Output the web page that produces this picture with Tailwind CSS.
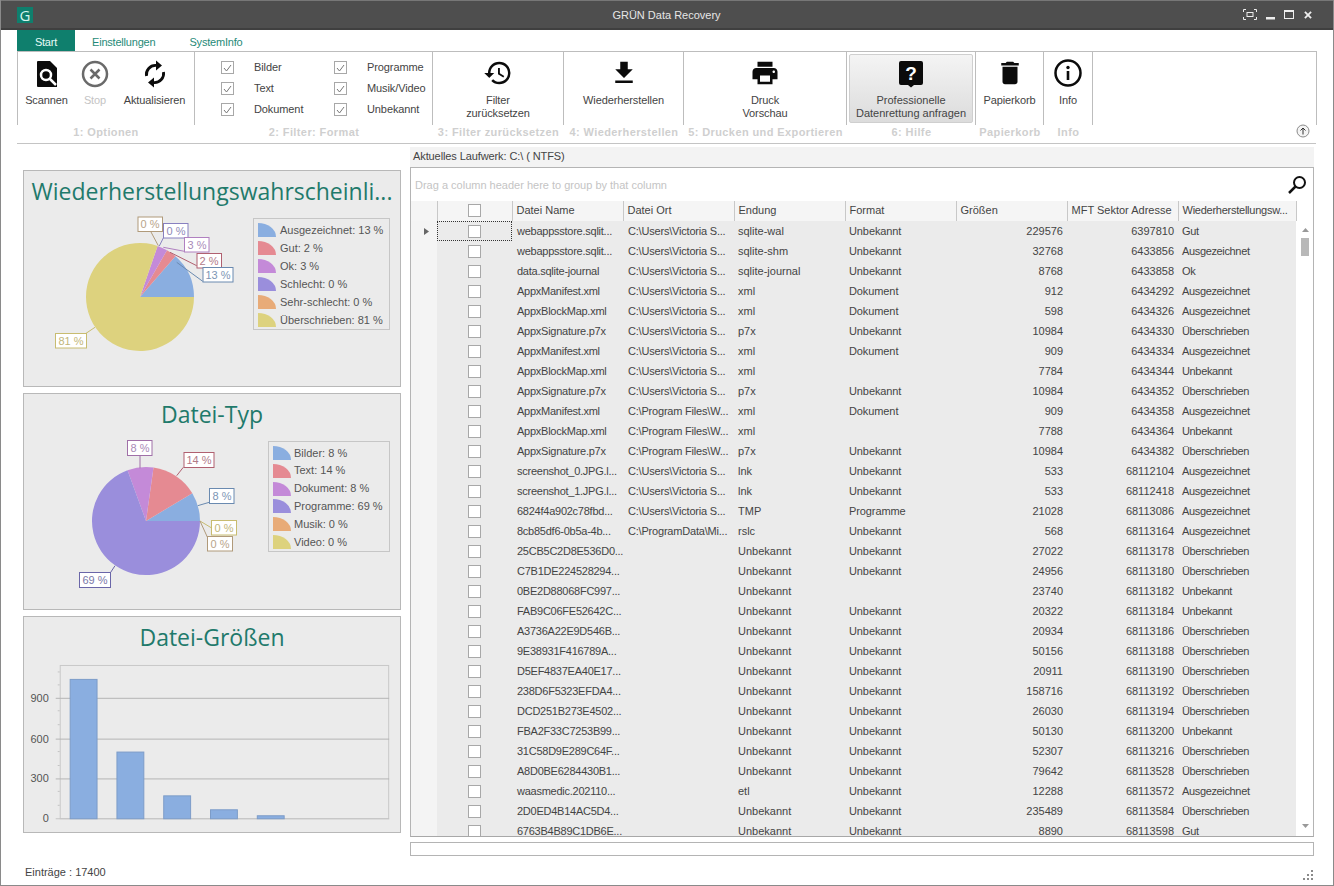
<!DOCTYPE html>
<html lang="de">
<head>
    <title>GRÜN Data Recovery</title>
    <script src="https://cdn.jsdelivr.net/npm/@tailwindcss/browser@4"></script>
</head>
<body class="bg-white">
<div class="w-[1334px] h-[886px] flex flex-col overflow-hidden bg-white border-r border-b border-l border-[#8a8a8a] font-['Liberation_Sans',sans-serif] text-[11px] text-[#444]">

    <!-- title bar -->
    <div class="h-[30px] shrink-0 bg-[#4e4e4e] border-t border-[#777] border-b-2 border-b-[#3f3f3f] flex items-center pl-[16px] pr-[21px] text-white">
        <div class="w-[16px] h-[16px] bg-[#0f7f6d] text-[#d8f5ee] font-['Open_Sans',sans-serif] text-[15px] leading-[16px] text-center">G</div>
        <div class="flex-1 text-center text-[#e6e6e6] pl-[57px] pt-[2px]">GRÜN Data Recovery</div>
        <div class="flex items-center gap-[9px]">
            <svg width="14" height="11" viewBox="0 0 14 11" fill="none" stroke="#eee"><path d="M.5 3V.5H3M11 .5h2.500V3M13.500 8v2.500H11M3 10.500H.5V8"/><rect x="4" y="3.500" width="6" height="4" stroke-width="1"/></svg>
            <svg width="9" height="10" viewBox="0 0 9 10"><rect y="7" width="9" height="2.500" fill="#eee"/></svg>
            <svg width="10" height="9" viewBox="0 0 10 9" fill="none" stroke="#eee"><rect x=".5" y="1" width="9" height="7.500"/><rect x="0" y="0" width="10" height="2" fill="#eee" stroke="none"/></svg>
            <svg class="ml-[1px]" width="8" height="8" viewBox="0 0 9 9" stroke="#eee" stroke-width="2"><path d="M1 1l7 7M8 1L1 8"/></svg>
        </div>
    </div>

    <!-- tabs -->
    <div class="h-[21px] shrink-0 flex pl-[16px] text-[#1f8a78] tracking-[-.2px]">
        <div class="w-[58px] bg-[#0f7f6d] text-[#e8fbf6] flex items-center justify-center pt-[3px]">Start</div>
        <div class="ml-[17px] flex items-center pt-[3px]">Einstellungen</div>
        <div class="ml-[34px] flex items-center pt-[3px]">SystemInfo</div>
    </div>

    <!-- ribbon -->
    <div class="h-[92px] shrink-0 flex pl-[16px] pr-[16px] border-b border-transparent tracking-[-.1px]">
        <div class="w-[178px] flex flex-col">
            <div class="h-[74px] border-t border-l border-r border-[#bdbdbd] flex pt-[8px] text-center">
                <div class="w-[57px] flex flex-col items-center">
                    <svg class="w-[24px] h-[28px]" viewBox="0 0 24 28"><path d="M3 1h12l7 7v19H3a1 1 0 0 1-1-1V2a1 1 0 0 1 1-1z" fill="#0b0b0b"/><circle cx="11" cy="15" r="5" fill="none" stroke="#fff" stroke-width="2.500"/><path d="M15 19l6 6" stroke="#fff" stroke-width="2.500"/></svg>
                    <span class="mt-[4px]">Scannen</span>
                </div>
                <div class="w-[40px] flex flex-col items-center text-[#c4c4c4]">
                    <svg class="w-[28px] h-[28px]" viewBox="0 0 28 28" fill="none" stroke="#6a6a6a" stroke-width="2.500"><circle cx="14" cy="14" r="12"/><path d="M9.500 9.500l9 9M18.500 9.500l-9 9"/></svg>
                    <span class="mt-[4px]">Stop</span>
                </div>
                <div class="flex-1 flex flex-col items-center">
                    <svg class="w-[22px] h-[28px]" viewBox="0 0 22 28" fill="none" stroke="#0b0b0b" stroke-width="2.800"><path d="M2.500 16A9 9 0 0 1 12 5.500"/><path d="M19.500 12A9 9 0 0 1 10 22.500"/><path d="M12 .5L18 5.500L12 10.500Z" fill="#0b0b0b" stroke="none"/><path d="M10 17.500L4 22.500L10 27.500Z" fill="#0b0b0b" stroke="none"/></svg>
                    <span class="mt-[4px]">Aktualisieren</span>
                </div>
            </div>
            <div class="text-center font-bold text-[#cfcfcf] -mt-[1px] tracking-[.4px]">1: Optionen</div>
        </div>

        <div class="w-[238px] flex flex-col">
            <div class="h-[74px] border-t border-r border-[#bdbdbd] grid grid-cols-[113px_1fr] grid-rows-[21px_21px_21px] pl-[26px] pt-[5px] items-center">
                <div class="flex items-center gap-[20px]"><span class="w-[13px] h-[13px] border border-[#a8a8a8] bg-white flex items-center justify-center"><svg width="9" height="8" viewBox="0 0 9 8" fill="none" stroke="#777"><path d="M1 4l2.500 3L8 1"/></svg></span>Bilder</div>
                <div class="flex items-center gap-[20px]"><span class="w-[13px] h-[13px] border border-[#a8a8a8] bg-white flex items-center justify-center"><svg width="9" height="8" viewBox="0 0 9 8" fill="none" stroke="#777"><path d="M1 4l2.500 3L8 1"/></svg></span>Programme</div>
                <div class="flex items-center gap-[20px]"><span class="w-[13px] h-[13px] border border-[#a8a8a8] bg-white flex items-center justify-center"><svg width="9" height="8" viewBox="0 0 9 8" fill="none" stroke="#777"><path d="M1 4l2.500 3L8 1"/></svg></span>Text</div>
                <div class="flex items-center gap-[20px]"><span class="w-[13px] h-[13px] border border-[#a8a8a8] bg-white flex items-center justify-center"><svg width="9" height="8" viewBox="0 0 9 8" fill="none" stroke="#777"><path d="M1 4l2.500 3L8 1"/></svg></span>Musik/Video</div>
                <div class="flex items-center gap-[20px]"><span class="w-[13px] h-[13px] border border-[#a8a8a8] bg-white flex items-center justify-center"><svg width="9" height="8" viewBox="0 0 9 8" fill="none" stroke="#777"><path d="M1 4l2.500 3L8 1"/></svg></span>Dokument</div>
                <div class="flex items-center gap-[20px]"><span class="w-[13px] h-[13px] border border-[#a8a8a8] bg-white flex items-center justify-center"><svg width="9" height="8" viewBox="0 0 9 8" fill="none" stroke="#777"><path d="M1 4l2.500 3L8 1"/></svg></span>Unbekannt</div>
            </div>
            <div class="text-center font-bold text-[#cfcfcf] -mt-[1px] tracking-[.4px]">2: Filter: Format</div>
        </div>

        <div class="w-[131px] flex flex-col">
            <div class="h-[74px] border-t border-r border-[#bdbdbd] flex flex-col items-center pt-[6px] leading-[13px] text-center">
                <svg class="w-[32px] h-[30px]" viewBox="0 0 24 24" fill="#0b0b0b"><path d="M13 3a9 9 0 0 0-9 9H1l3.890 3.890.07.14L9 12H6c0-3.870 3.130-7 7-7s7 3.130 7 7-3.130 7-7 7c-1.930 0-3.680-.79-4.940-2.060l-1.420 1.420A8.954 8.954 0 0 0 13 21a9 9 0 0 0 0-18zm-1 5v5l4.280 2.540.72-1.210-3.500-2.080V8H12z"/></svg>
                <span class="mt-[6px]">Filter<br>zurücksetzen</span>
            </div>
            <div class="text-center font-bold text-[#cfcfcf] -mt-[1px] tracking-[.4px]">3: Filter zurücksetzen</div>
        </div>

        <div class="w-[120px] flex flex-col">
            <div class="h-[74px] border-t border-r border-[#bdbdbd] flex flex-col items-center pt-[6px] leading-[13px] text-center">
                <svg class="w-[30px] h-[30px]" viewBox="0 0 24 24" fill="#0b0b0b"><path d="M19 9h-4V3H9v6H5l7 7 7-7zM5 18v2h14v-2H5z"/></svg>
                <span class="mt-[6px]">Wiederherstellen</span>
            </div>
            <div class="text-center font-bold text-[#cfcfcf] -mt-[1px] tracking-[.4px]">4: Wiederherstellen</div>
        </div>

        <div class="w-[163px] flex flex-col">
            <div class="h-[74px] border-t border-r border-[#bdbdbd] flex flex-col items-center pt-[6px] leading-[13px] text-center">
                <svg class="w-[32px] h-[30px]" viewBox="0 0 24 24" fill="#0b0b0b"><path d="M19 8H5c-1.660 0-3 1.340-3 3v6h4v4h12v-4h4v-6c0-1.660-1.340-3-3-3zm-3 11H8v-5h8v5zm3-7c-.55 0-1-.45-1-1s.45-1 1-1 1 .45 1 1-.45 1-1 1zm-1-9H6v4h12V3z"/></svg>
                <span class="mt-[6px]">Druck<br>Vorschau</span>
            </div>
            <div class="text-center font-bold text-[#cfcfcf] -mt-[1px] tracking-[.4px]">5: Drucken und Exportieren</div>
        </div>

        <div class="w-[129px] flex flex-col">
            <div class="h-[74px] border-t border-r border-[#bdbdbd] pt-[2px] px-[2px]">
                <div class="h-[69px] border border-[#cfcfcf] rounded-[2px] bg-gradient-to-b from-[#f4f4f4] to-[#dcdcdc] flex flex-col items-center pt-[5px] leading-[13px] text-center">
                    <svg class="w-[26px] h-[28px]" viewBox="0 0 26 28"><path d="M3 1h20a2 2 0 0 1 2 2v20a2 2 0 0 1-2 2h-7l-3 2.500L10 25H3a2 2 0 0 1-2-2V3a2 2 0 0 1 2-2z" fill="#0b0b0b"/><text x="13" y="20" text-anchor="middle" fill="#fff" font-size="19" font-weight="700" font-family="Liberation Sans, sans-serif">?</text></svg>
                    <span class="mt-[6px] tracking-normal">Professionelle<br>Datenrettung anfragen</span>
                </div>
            </div>
            <div class="text-center font-bold text-[#cfcfcf] -mt-[1px] tracking-[.4px]">6: Hilfe</div>
        </div>

        <div class="w-[68px] flex flex-col">
            <div class="h-[74px] border-t border-r border-[#bdbdbd] flex flex-col items-center pt-[6px] leading-[13px] text-center">
                <svg class="w-[32px] h-[30px]" viewBox="0 0 24 24" fill="#0b0b0b"><path d="M6 19c0 1.100.9 2 2 2h8c1.100 0 2-.9 2-2V7H6v12zM19 4h-3.500l-1-1h-5l-1 1H5v2h14V4z"/></svg>
                <span class="mt-[6px]">Papierkorb</span>
            </div>
            <div class="text-center font-bold text-[#cfcfcf] -mt-[1px] tracking-[.4px]">Papierkorb</div>
        </div>

        <div class="w-[49px] flex flex-col">
            <div class="h-[74px] border-t border-r border-[#bdbdbd] flex flex-col items-center pt-[6px] leading-[13px] text-center">
                <svg class="w-[30px] h-[30px]" viewBox="0 0 30 30" fill="none"><circle cx="15" cy="15" r="12.500" stroke="#0b0b0b" stroke-width="2.500"/><circle cx="15" cy="9.500" r="1.700" fill="#0b0b0b"/><rect x="13.700" y="13" width="2.600" height="9" fill="#0b0b0b"/></svg>
                <span class="mt-[6px]">Info</span>
            </div>
            <div class="text-center font-bold text-[#cfcfcf] -mt-[1px] tracking-[.4px]">Info</div>
        </div>

        <div class="flex-1 flex flex-col">
            <div class="h-[74px] border-t border-r border-[#bdbdbd]"></div>
            <div class="flex justify-end pr-[7px] -mt-[1px]">
                <svg width="14" height="14" viewBox="0 0 14 14" fill="#f4f4f4" stroke="#8a8a8a"><circle cx="7" cy="7" r="6"/><path d="M7 10.500V4M4.500 6.500L7 4l2.500 2.500" fill="none" stroke="#333"/></svg>
            </div>
        </div>
    </div>
    <div class="h-px shrink-0 bg-[#c4c4c4] ml-[16px] mr-[17px]"></div>

    <!-- main -->
    <div class="flex-1 flex min-h-0 relative">
        <!-- left charts -->
        <div class="w-[409px] shrink-0 pl-[22px] pr-[9px] pt-[26px] flex flex-col gap-[6px]">

            <div class="h-[217px] bg-[#ebebeb] border border-[#b8b8b8] flex flex-col">
                <div class="h-[42px] text-center font-['Open_Sans',sans-serif] text-[23px] leading-[41px] text-[#1f7a6b] whitespace-nowrap">Wiederherstellungswahrscheinli...</div>
                <div class="flex items-start">
                    <svg class="w-[229px] h-[174px] shrink-0 font-['Liberation_Sans',sans-serif] text-[11px]" viewBox="24 213 229 174">
                        <g transform="translate(-1 0)">
                            <path d="M141 298L195 298A54 54 0 0 0 176.400 257.200Z" fill="#8aaee0"/>
                            <path d="M141 298L176.400 257.200A54 54 0 0 0 168 251.200Z" fill="#e58a92"/>
                            <path d="M141 298L168 251.200A54 54 0 0 0 158.600 246.900Z" fill="#c48ad8"/>
                            <path d="M141 298L158.600 246.900A54 54 0 1 0 195 298Z" fill="#ddd27e"/>
                        </g>
                        <g fill="none" stroke-width="1">
                            <path d="M151 233L158.300 246.700" stroke="#b09a7a"/>
                            <path d="M163.300 239L159.300 247" stroke="#8880c0"/>
                            <path d="M184.300 252.300L163.300 248.300" stroke="#b080c0"/>
                            <path d="M196.700 266.700L170 253.300" stroke="#b06070"/>
                            <path d="M202.700 282.300L176.700 263.300" stroke="#6a8ab0"/>
                            <path d="M85 335L95 328.300" stroke="#c8bc70"/>
                        </g>
                        <g fill="#fff">
                            <rect x="138" y="218" width="24.500" height="14.500" stroke="#b09a7a"/>
                            <rect x="163.500" y="224.500" width="24.500" height="14.500" stroke="#8880c0"/>
                            <rect x="184.500" y="238.500" width="24.500" height="14.500" stroke="#b080c0"/>
                            <rect x="197" y="254.500" width="24.500" height="14.500" stroke="#b06070"/>
                            <rect x="203" y="268.500" width="30" height="14.500" stroke="#6a8ab0"/>
                            <rect x="55.500" y="334.500" width="31" height="14.500" stroke="#c8bc70"/>
                        </g>
                        <g text-anchor="middle" font-size="11">
                            <text x="150" y="229" fill="#b8a58a">0 %</text>
                            <text x="176" y="235.500" fill="#8f8ab8">0 %</text>
                            <text x="197" y="249.500" fill="#a98ab8">3 %</text>
                            <text x="209" y="265.500" fill="#b07a88">2 %</text>
                            <text x="218" y="279.500" fill="#7d95b5">13 %</text>
                            <text x="71" y="345.500" fill="#bfb67a">81 %</text>
                        </g>
                    </svg>
                    <div class="w-[137px] h-[112px] mt-[6px] border border-[#c6c6c6] pl-[4px] pt-[2px] flex flex-col text-[#555] whitespace-nowrap">
                        <div class="h-[18px] flex items-center gap-[4px]"><svg width="18" height="14" viewBox="0 0 18 14"><path d="M0 14V0a18 14 0 0 1 18 14Z" fill="#8aaee0"/></svg>Ausgezeichnet: 13 %</div>
                        <div class="h-[18px] flex items-center gap-[4px]"><svg width="18" height="14" viewBox="0 0 18 14"><path d="M0 14V0a18 14 0 0 1 18 14Z" fill="#e58a92"/></svg>Gut: 2 %</div>
                        <div class="h-[18px] flex items-center gap-[4px]"><svg width="18" height="14" viewBox="0 0 18 14"><path d="M0 14V0a18 14 0 0 1 18 14Z" fill="#c48ad8"/></svg>Ok: 3 %</div>
                        <div class="h-[18px] flex items-center gap-[4px]"><svg width="18" height="14" viewBox="0 0 18 14"><path d="M0 14V0a18 14 0 0 1 18 14Z" fill="#9a8edc"/></svg>Schlecht: 0 %</div>
                        <div class="h-[18px] flex items-center gap-[4px]"><svg width="18" height="14" viewBox="0 0 18 14"><path d="M0 14V0a18 14 0 0 1 18 14Z" fill="#e8ab78"/></svg>Sehr-schlecht: 0 %</div>
                        <div class="h-[18px] flex items-center gap-[4px]"><svg width="18" height="14" viewBox="0 0 18 14"><path d="M0 14V0a18 14 0 0 1 18 14Z" fill="#ddd27e"/></svg>Überschrieben: 81 %</div>
                    </div>
                </div>
            </div>

            <div class="h-[217px] bg-[#ebebeb] border border-[#b8b8b8] flex flex-col">
                <div class="h-[42px] text-center font-['Open_Sans',sans-serif] text-[23px] leading-[41px] text-[#1f7a6b] whitespace-nowrap">Datei-Typ</div>
                <div class="flex items-start">
                    <svg class="w-[244px] h-[174px] shrink-0" viewBox="24 436 244 174">
                        <path d="M146 522L200 522A54 54 0 0 0 192.300 494.200Z" fill="#8aaee0"/>
                        <path d="M146 522L192.300 494.200A54 54 0 0 0 153.500 468.500Z" fill="#e58a92"/>
                        <path d="M146 522L153.500 468.500A54 54 0 0 0 127.500 471.300Z" fill="#c48ad8"/>
                        <path d="M146 522L127.500 471.300A54 54 0 1 0 200 522Z" fill="#9a8edc"/>
                        <g fill="none" stroke-width="1">
                            <path d="M140 456.700V469.300" stroke="#a070a8"/>
                            <path d="M183.300 468.300L176.700 476.700" stroke="#b06070"/>
                            <path d="M209.300 503.300L197.700 506.700" stroke="#6a8ab0"/>
                            <path d="M200 522L211.700 529" stroke="#c8bc70"/>
                            <path d="M200 522L207.300 538" stroke="#b09a7a"/>
                            <path d="M110.700 573.300L115 566.700" stroke="#6a66a8"/>
                        </g>
                        <g fill="#fff">
                            <rect x="127.500" y="441.500" width="24.500" height="15" stroke="#a070a8"/>
                            <rect x="184" y="453.500" width="30" height="15" stroke="#b06070"/>
                            <rect x="209.500" y="489.500" width="24.500" height="15" stroke="#6a8ab0"/>
                            <rect x="211.500" y="521.500" width="25" height="14.500" stroke="#c8bc70"/>
                            <rect x="207.500" y="537.500" width="25" height="14.500" stroke="#b09a7a"/>
                            <rect x="79.500" y="573.500" width="31" height="15" stroke="#6a66a8"/>
                        </g>
                        <g text-anchor="middle" font-size="11" font-family="Liberation Sans, sans-serif">
                            <text x="140" y="453" fill="#a98ab8">8 %</text>
                            <text x="199" y="465" fill="#b07a88">14 %</text>
                            <text x="222" y="501" fill="#7d95b5">8 %</text>
                            <text x="224" y="533" fill="#bfb67a">0 %</text>
                            <text x="220" y="549" fill="#b8a58a">0 %</text>
                            <text x="95" y="585" fill="#7a78a8">69 %</text>
                        </g>
                    </svg>
                    <div class="w-[122px] h-[111px] mt-[6px] border border-[#c6c6c6] pl-[4px] pt-[2px] flex flex-col text-[#555] whitespace-nowrap">
                        <div class="h-[18px] flex items-center gap-[3px]"><svg width="18" height="14" viewBox="0 0 18 14"><path d="M0 14V0a18 14 0 0 1 18 14Z" fill="#8aaee0"/></svg>Bilder: 8 %</div>
                        <div class="h-[18px] flex items-center gap-[3px]"><svg width="18" height="14" viewBox="0 0 18 14"><path d="M0 14V0a18 14 0 0 1 18 14Z" fill="#e58a92"/></svg>Text: 14 %</div>
                        <div class="h-[18px] flex items-center gap-[3px]"><svg width="18" height="14" viewBox="0 0 18 14"><path d="M0 14V0a18 14 0 0 1 18 14Z" fill="#c48ad8"/></svg>Dokument: 8 %</div>
                        <div class="h-[18px] flex items-center gap-[3px]"><svg width="18" height="14" viewBox="0 0 18 14"><path d="M0 14V0a18 14 0 0 1 18 14Z" fill="#9a8edc"/></svg>Programme: 69 %</div>
                        <div class="h-[18px] flex items-center gap-[3px]"><svg width="18" height="14" viewBox="0 0 18 14"><path d="M0 14V0a18 14 0 0 1 18 14Z" fill="#e8ab78"/></svg>Musik: 0 %</div>
                        <div class="h-[18px] flex items-center gap-[3px]"><svg width="18" height="14" viewBox="0 0 18 14"><path d="M0 14V0a18 14 0 0 1 18 14Z" fill="#ddd27e"/></svg>Video: 0 %</div>
                    </div>
                </div>
            </div>

            <div class="h-[217px] bg-[#ebebeb] border border-[#b8b8b8] flex flex-col">
                <div class="h-[42px] text-center font-['Open_Sans',sans-serif] text-[23px] leading-[41px] text-[#1f7a6b] whitespace-nowrap">Datei-Größen</div>
                <svg class="w-[376px] h-[174px]" viewBox="25 659 376 174">
                    <rect x="60.500" y="665.500" width="330" height="154" fill="none" stroke="#c8c8c8"/>
                    <g stroke="#b4b4b4"><path d="M56 698.500H391M56 739.500H391M56 779.500H391"/><path d="M56 819.500H391" stroke="#c4c4c4"/></g>
                    <g stroke="#c4c4c4"><path d="M58 672h2M58 685h2M58 711h2M58 725h2M58 752h2M58 766h2M58 792h2M58 806h2"/></g>
                    <g fill="#8aaee0" stroke="#7d9cc8">
                        <rect x="70.500" y="679.500" width="27" height="140"/>
                        <rect x="117.500" y="752.500" width="27" height="67"/>
                        <rect x="164.500" y="796.500" width="27" height="23"/>
                        <rect x="211.500" y="810.500" width="27" height="9"/>
                        <rect x="258.500" y="816.500" width="27" height="3"/>
                    </g>
                    <g text-anchor="end" font-size="11" fill="#555" font-family="Liberation Sans, sans-serif">
                        <text x="49" y="702">900</text>
                        <text x="49" y="743">600</text>
                        <text x="49" y="783">300</text>
                        <text x="49" y="823">0</text>
                    </g>
                </svg>
            </div>

            <div class="mt-[25px] pl-[2px] text-[#444]">Einträge : 17400</div>
        </div>

        <!-- grid -->
        <div class="flex-1 flex flex-col min-w-0 pt-[3px] pr-[19px]">
            <div class="h-[20px] shrink-0 bg-[#f3f3f3] flex items-center pl-[3px] pb-[2px] tracking-[-.1px]">Aktuelles Laufwerk: C:\ ( NTFS)</div>
            <div class="h-[670px] shrink-0 border border-b-[#a8a8a8] border-[#b4b4b4] flex flex-col overflow-hidden">
                <div class="h-[33px] shrink-0 flex items-center justify-between pl-[4px] pr-[6px] text-[#c4c4c4]">
                    <span class="pt-[2px]">Drag a column header here to group by that column</span>
                    <svg width="20" height="20" viewBox="0 0 20 20" fill="none" stroke="#111"><circle cx="12.500" cy="7.500" r="5.500" stroke-width="2"/><path d="M8.500 11.500L2 18" stroke-width="2.500"/></svg>
                </div>
                <div class="flex-1 flex min-h-0">
                    <table class="w-[885px] table-fixed border-collapse whitespace-nowrap self-start [&_td]:h-[20px] [&_td]:p-0 [&_td]:px-[4px] [&_td]:overflow-hidden [&_td]:bg-[#ebebeb] [&_td:first-child]:bg-[#f4f4f4] [&_td:nth-child(3)]:pl-[5px] [&_td:nth-child(3)]:pr-0 [&_td:nth-child(3)]:tracking-[-.25px] [&_td:nth-child(4)]:pl-[5px] [&_td:nth-child(4)]:pr-0 [&_td:nth-child(4)]:tracking-[-.2px] [&_td:nth-child(6)]:tracking-[-.1px] [&_td:nth-child(9)]:tracking-[-.35px] [&_th]:h-[20px] [&_th]:p-0 [&_th]:px-[4px] [&_th]:pb-[2px] [&_th]:font-normal [&_th]:text-left [&_th]:overflow-hidden [&_th]:bg-[#f5f5f5] [&_th]:border-r [&_th]:border-[#c8c8c8] [&_th:last-child]:pr-0 [&_th:last-child]:tracking-[-.25px]">
                        <colgroup><col class="w-[26px]"><col class="w-[75px]"><col class="w-[111px]"><col class="w-[111px]"><col class="w-[111px]"><col class="w-[111px]"><col class="w-[111px]"><col class="w-[111px]"><col class="w-[118px]"></colgroup>
                        <thead><tr>
                            <th></th><th><span class="block mx-auto w-[13px] h-[13px] border border-[#a8a8a8] bg-white"></span></th><th>Datei Name</th><th>Datei Ort</th><th>Endung</th><th>Format</th><th>Größen</th><th>MFT Sektor Adresse</th><th>Wiederherstellungsw...</th>
                        </tr></thead>
                        <tbody class="[&_td:nth-child(2)>span]:block [&_td:nth-child(2)>span]:mx-auto [&_td:nth-child(2)>span]:w-[13px] [&_td:nth-child(2)>span]:h-[13px] [&_td:nth-child(2)>span]:border [&_td:nth-child(2)>span]:border-[#a8a8a8] [&_td:nth-child(2)>span]:bg-white [&_td:nth-child(7)]:text-right [&_td:nth-child(8)]:text-right">
                            <tr><td><svg class="ml-[9px]" width="5" height="7" viewBox="0 0 5 7"><path d="M0 0l5 3.500L0 7z" fill="#666"/></svg></td><td class="outline-1 outline-dotted -outline-offset-1 outline-[#333]"><span></span></td><td>webappsstore.sqlit...</td><td>C:\Users\Victoria S...</td><td>sqlite-wal</td><td>Unbekannt</td><td>229576</td><td>6397810</td><td>Gut</td></tr>
                            <tr><td></td><td><span></span></td><td>webappsstore.sqlit...</td><td>C:\Users\Victoria S...</td><td>sqlite-shm</td><td>Unbekannt</td><td>32768</td><td>6433856</td><td>Ausgezeichnet</td></tr>
                            <tr><td></td><td><span></span></td><td>data.sqlite-journal</td><td>C:\Users\Victoria S...</td><td>sqlite-journal</td><td>Unbekannt</td><td>8768</td><td>6433858</td><td>Ok</td></tr>
                            <tr><td></td><td><span></span></td><td>AppxManifest.xml</td><td>C:\Users\Victoria S...</td><td>xml</td><td>Dokument</td><td>912</td><td>6434292</td><td>Ausgezeichnet</td></tr>
                            <tr><td></td><td><span></span></td><td>AppxBlockMap.xml</td><td>C:\Users\Victoria S...</td><td>xml</td><td>Dokument</td><td>598</td><td>6434326</td><td>Ausgezeichnet</td></tr>
                            <tr><td></td><td><span></span></td><td>AppxSignature.p7x</td><td>C:\Users\Victoria S...</td><td>p7x</td><td>Unbekannt</td><td>10984</td><td>6434330</td><td>Überschrieben</td></tr>
                            <tr><td></td><td><span></span></td><td>AppxManifest.xml</td><td>C:\Users\Victoria S...</td><td>xml</td><td>Dokument</td><td>909</td><td>6434334</td><td>Ausgezeichnet</td></tr>
                            <tr><td></td><td><span></span></td><td>AppxBlockMap.xml</td><td>C:\Users\Victoria S...</td><td>xml</td><td></td><td>7784</td><td>6434344</td><td>Unbekannt</td></tr>
                            <tr><td></td><td><span></span></td><td>AppxSignature.p7x</td><td>C:\Users\Victoria S...</td><td>p7x</td><td>Unbekannt</td><td>10984</td><td>6434352</td><td>Überschrieben</td></tr>
                            <tr><td></td><td><span></span></td><td>AppxManifest.xml</td><td>C:\Program Files\W...</td><td>xml</td><td>Dokument</td><td>909</td><td>6434358</td><td>Ausgezeichnet</td></tr>
                            <tr><td></td><td><span></span></td><td>AppxBlockMap.xml</td><td>C:\Program Files\W...</td><td>xml</td><td></td><td>7788</td><td>6434364</td><td>Unbekannt</td></tr>
                            <tr><td></td><td><span></span></td><td>AppxSignature.p7x</td><td>C:\Program Files\W...</td><td>p7x</td><td>Unbekannt</td><td>10984</td><td>6434382</td><td>Überschrieben</td></tr>
                            <tr><td></td><td><span></span></td><td>screenshot_0.JPG.l...</td><td>C:\Users\Victoria S...</td><td>lnk</td><td>Unbekannt</td><td>533</td><td>68112104</td><td>Ausgezeichnet</td></tr>
                            <tr><td></td><td><span></span></td><td>screenshot_1.JPG.l...</td><td>C:\Users\Victoria S...</td><td>lnk</td><td>Unbekannt</td><td>533</td><td>68112418</td><td>Ausgezeichnet</td></tr>
                            <tr><td></td><td><span></span></td><td>6824f4a902c78fbd...</td><td>C:\Users\Victoria S...</td><td>TMP</td><td>Programme</td><td>21028</td><td>68113086</td><td>Ausgezeichnet</td></tr>
                            <tr><td></td><td><span></span></td><td>8cb85df6-0b5a-4b...</td><td>C:\ProgramData\Mi...</td><td>rslc</td><td>Unbekannt</td><td>568</td><td>68113164</td><td>Ausgezeichnet</td></tr>
                            <tr><td></td><td><span></span></td><td>25CB5C2D8E536D0...</td><td></td><td>Unbekannt</td><td>Unbekannt</td><td>27022</td><td>68113178</td><td>Überschrieben</td></tr>
                            <tr><td></td><td><span></span></td><td>C7B1DE224528294...</td><td></td><td>Unbekannt</td><td>Unbekannt</td><td>24956</td><td>68113180</td><td>Überschrieben</td></tr>
                            <tr><td></td><td><span></span></td><td>0BE2D88068FC997...</td><td></td><td>Unbekannt</td><td></td><td>23740</td><td>68113182</td><td>Unbekannt</td></tr>
                            <tr><td></td><td><span></span></td><td>FAB9C06FE52642C...</td><td></td><td>Unbekannt</td><td>Unbekannt</td><td>20322</td><td>68113184</td><td>Unbekannt</td></tr>
                            <tr><td></td><td><span></span></td><td>A3736A22E9D546B...</td><td></td><td>Unbekannt</td><td>Unbekannt</td><td>20934</td><td>68113186</td><td>Überschrieben</td></tr>
                            <tr><td></td><td><span></span></td><td>9E38931F416789A...</td><td></td><td>Unbekannt</td><td>Unbekannt</td><td>50156</td><td>68113188</td><td>Überschrieben</td></tr>
                            <tr><td></td><td><span></span></td><td>D5EF4837EA40E17...</td><td></td><td>Unbekannt</td><td>Unbekannt</td><td>20911</td><td>68113190</td><td>Überschrieben</td></tr>
                            <tr><td></td><td><span></span></td><td>238D6F5323EFDA4...</td><td></td><td>Unbekannt</td><td>Unbekannt</td><td>158716</td><td>68113192</td><td>Überschrieben</td></tr>
                            <tr><td></td><td><span></span></td><td>DCD251B273E4502...</td><td></td><td>Unbekannt</td><td>Unbekannt</td><td>26030</td><td>68113194</td><td>Überschrieben</td></tr>
                            <tr><td></td><td><span></span></td><td>FBA2F33C7253B99...</td><td></td><td>Unbekannt</td><td>Unbekannt</td><td>50130</td><td>68113200</td><td>Unbekannt</td></tr>
                            <tr><td></td><td><span></span></td><td>31C58D9E289C64F...</td><td></td><td>Unbekannt</td><td>Unbekannt</td><td>52307</td><td>68113216</td><td>Überschrieben</td></tr>
                            <tr><td></td><td><span></span></td><td>A8D0BE6284430B1...</td><td></td><td>Unbekannt</td><td>Unbekannt</td><td>79642</td><td>68113528</td><td>Überschrieben</td></tr>
                            <tr><td></td><td><span></span></td><td>waasmedic.202110...</td><td></td><td>etl</td><td>Unbekannt</td><td>12288</td><td>68113572</td><td>Ausgezeichnet</td></tr>
                            <tr><td></td><td><span></span></td><td>2D0ED4B14AC5D4...</td><td></td><td>Unbekannt</td><td>Unbekannt</td><td>235489</td><td>68113584</td><td>Überschrieben</td></tr>
                            <tr><td></td><td><span></span></td><td>6763B4B89C1DB6E...</td><td></td><td>Unbekannt</td><td>Unbekannt</td><td>8890</td><td>68113598</td><td>Gut</td></tr>
                        </tbody>
                    </table>
                    <div class="w-[17px] shrink-0 flex flex-col items-center bg-white pt-[27px]">
                        <svg width="7" height="4" viewBox="0 0 7 4"><path d="M3.500 0L7 4H0z" fill="#999"/></svg>
                        <div class="w-[8px] h-[18px] mt-[6px] bg-[#b8b8b8]"></div>
                        <svg class="mt-auto mb-[8px]" width="7" height="4" viewBox="0 0 7 4"><path d="M3.500 4L7 0H0z" fill="#999"/></svg>
                    </div>
                </div>
            </div>
            <div class="h-[14px] mt-[5px] shrink-0 border border-[#b4b4b4] bg-white"></div>
            <div class="flex justify-end pr-0 mt-[14px]">
                <svg width="11" height="11" viewBox="0 0 11 11" fill="#8a8a8a"><rect x="8" y="0" width="2" height="2"/><rect x="4" y="4" width="2" height="2"/><rect x="8" y="4" width="2" height="2"/><rect x="0" y="8" width="2" height="2"/><rect x="4" y="8" width="2" height="2"/><rect x="8" y="8" width="2" height="2"/></svg>
            </div>
        </div>
    </div>
</div>
</body>
</html>
